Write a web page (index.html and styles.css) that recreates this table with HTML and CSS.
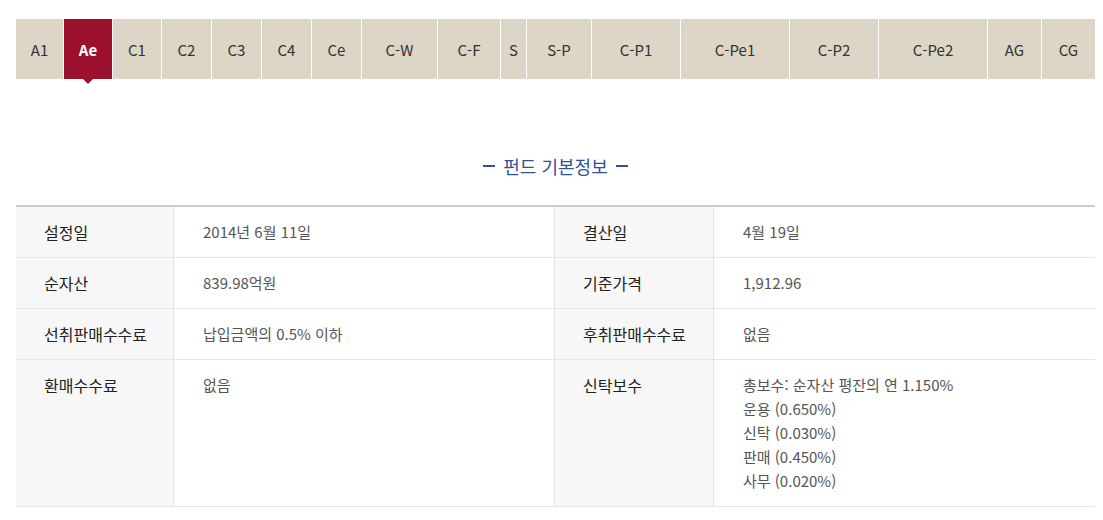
FILE: index.html
```html
<!DOCTYPE html>
<html lang="ko">
<head>
<meta charset="utf-8">
<title>펀드 기본정보</title>
<link rel="stylesheet" href="styles.css">
</head>
<body>
<div class="page">
  <ul class="tabs">
    <li class="tab">A1</li>
    <li class="tab active">Ae</li>
    <li class="tab">C1</li>
    <li class="tab">C2</li>
    <li class="tab">C3</li>
    <li class="tab">C4</li>
    <li class="tab">Ce</li>
    <li class="tab">C-W</li>
    <li class="tab">C-F</li>
    <li class="tab">S</li>
    <li class="tab">S-P</li>
    <li class="tab">C-P1</li>
    <li class="tab">C-Pe1</li>
    <li class="tab">C-P2</li>
    <li class="tab">C-Pe2</li>
    <li class="tab">AG</li>
    <li class="tab">CG</li>
  </ul>

  <h2 class="section-title">펀드 기본정보</h2>

  <div class="info">
    <div class="row">
      <div class="th">설정일</div>
      <div class="td">2014년 6월 11일</div>
      <div class="th">결산일</div>
      <div class="td">4월 19일</div>
    </div>
    <div class="row">
      <div class="th">순자산</div>
      <div class="td">839.98억원</div>
      <div class="th">기준가격</div>
      <div class="td">1,912.96</div>
    </div>
    <div class="row">
      <div class="th">선취판매수수료</div>
      <div class="td">납입금액의 0.5% 이하</div>
      <div class="th">후취판매수수료</div>
      <div class="td">없음</div>
    </div>
    <div class="row">
      <div class="th">환매수수료</div>
      <div class="td">없음</div>
      <div class="th">신탁보수</div>
      <div class="td">
        총보수: 순자산 평잔의 연 1.150%<br>
        운용 (0.650%)<br>
        신탁 (0.030%)<br>
        판매 (0.450%)<br>
        사무 (0.020%)
      </div>
    </div>
  </div>
</div>
</body>
</html>
```

FILE: styles.css
```css
* {
  box-sizing: border-box;
}

html, body {
  margin: 0;
  padding: 0;
  background: #fff;
}

body {
  font-family: "Noto Sans CJK KR", "Noto Sans", sans-serif;
  font-size: 14px;
  color: #333;
}

.page {
  padding: 19px 8px 0 16px;
}

.tabs {
  list-style: none;
  margin: 0;
  padding: 0;
  display: grid;
  grid-template-columns: 47px 48px 48px 49px 49px 49px 49px 75px 62px 25px 64px 88px 108px 88px 108px 53px 1fr;
  column-gap: 1px;
  background: #fff;
}

.tab {
  height: 60px;
  display: flex;
  align-items: center;
  justify-content: center;
  background: #ddd5c6;
  color: #333;
  font-size: 15px;
  white-space: nowrap;
  position: relative;
}

.tab.active {
  background: #9b102d;
  color: #fff;
  font-weight: bold;
}

.tab.active::after {
  content: "";
  position: absolute;
  left: 50%;
  top: 100%;
  margin-left: -5px;
  border-left: 5px solid transparent;
  border-right: 5px solid transparent;
  border-top: 5px solid #9b102d;
}

.section-title {
  margin: 73px 0 0;
  height: 28px;
  display: flex;
  align-items: center;
  justify-content: center;
  gap: 8px;
  font-size: 18px;
  font-weight: normal;
  color: #2f519b;
}

.section-title::before,
.section-title::after {
  content: "";
  width: 12px;
  height: 2px;
  background: #2f519b;
}

.info {
  margin-top: 25px;
  border-top: 2px solid #cccccc;
}

.row {
  display: grid;
  grid-template-columns: 158px 381px 159px 1fr;
  border-bottom: 1px solid #e5e5e5;
}

.th,
.td {
  padding: 13px 28px 13px 29px;
  line-height: 24px;
}

.th {
  background: #f7f7f7;
  color: #222;
  font-size: 16px;
  white-space: nowrap;
  border-right: 1px solid #e5e5e5;
  padding-left: 28px;
  padding-right: 4px;
}

.td {
  color: #555;
  font-size: 15px;
  border-right: 1px solid #e5e5e5;
}

.td:last-child {
  border-right: none;
}
```
